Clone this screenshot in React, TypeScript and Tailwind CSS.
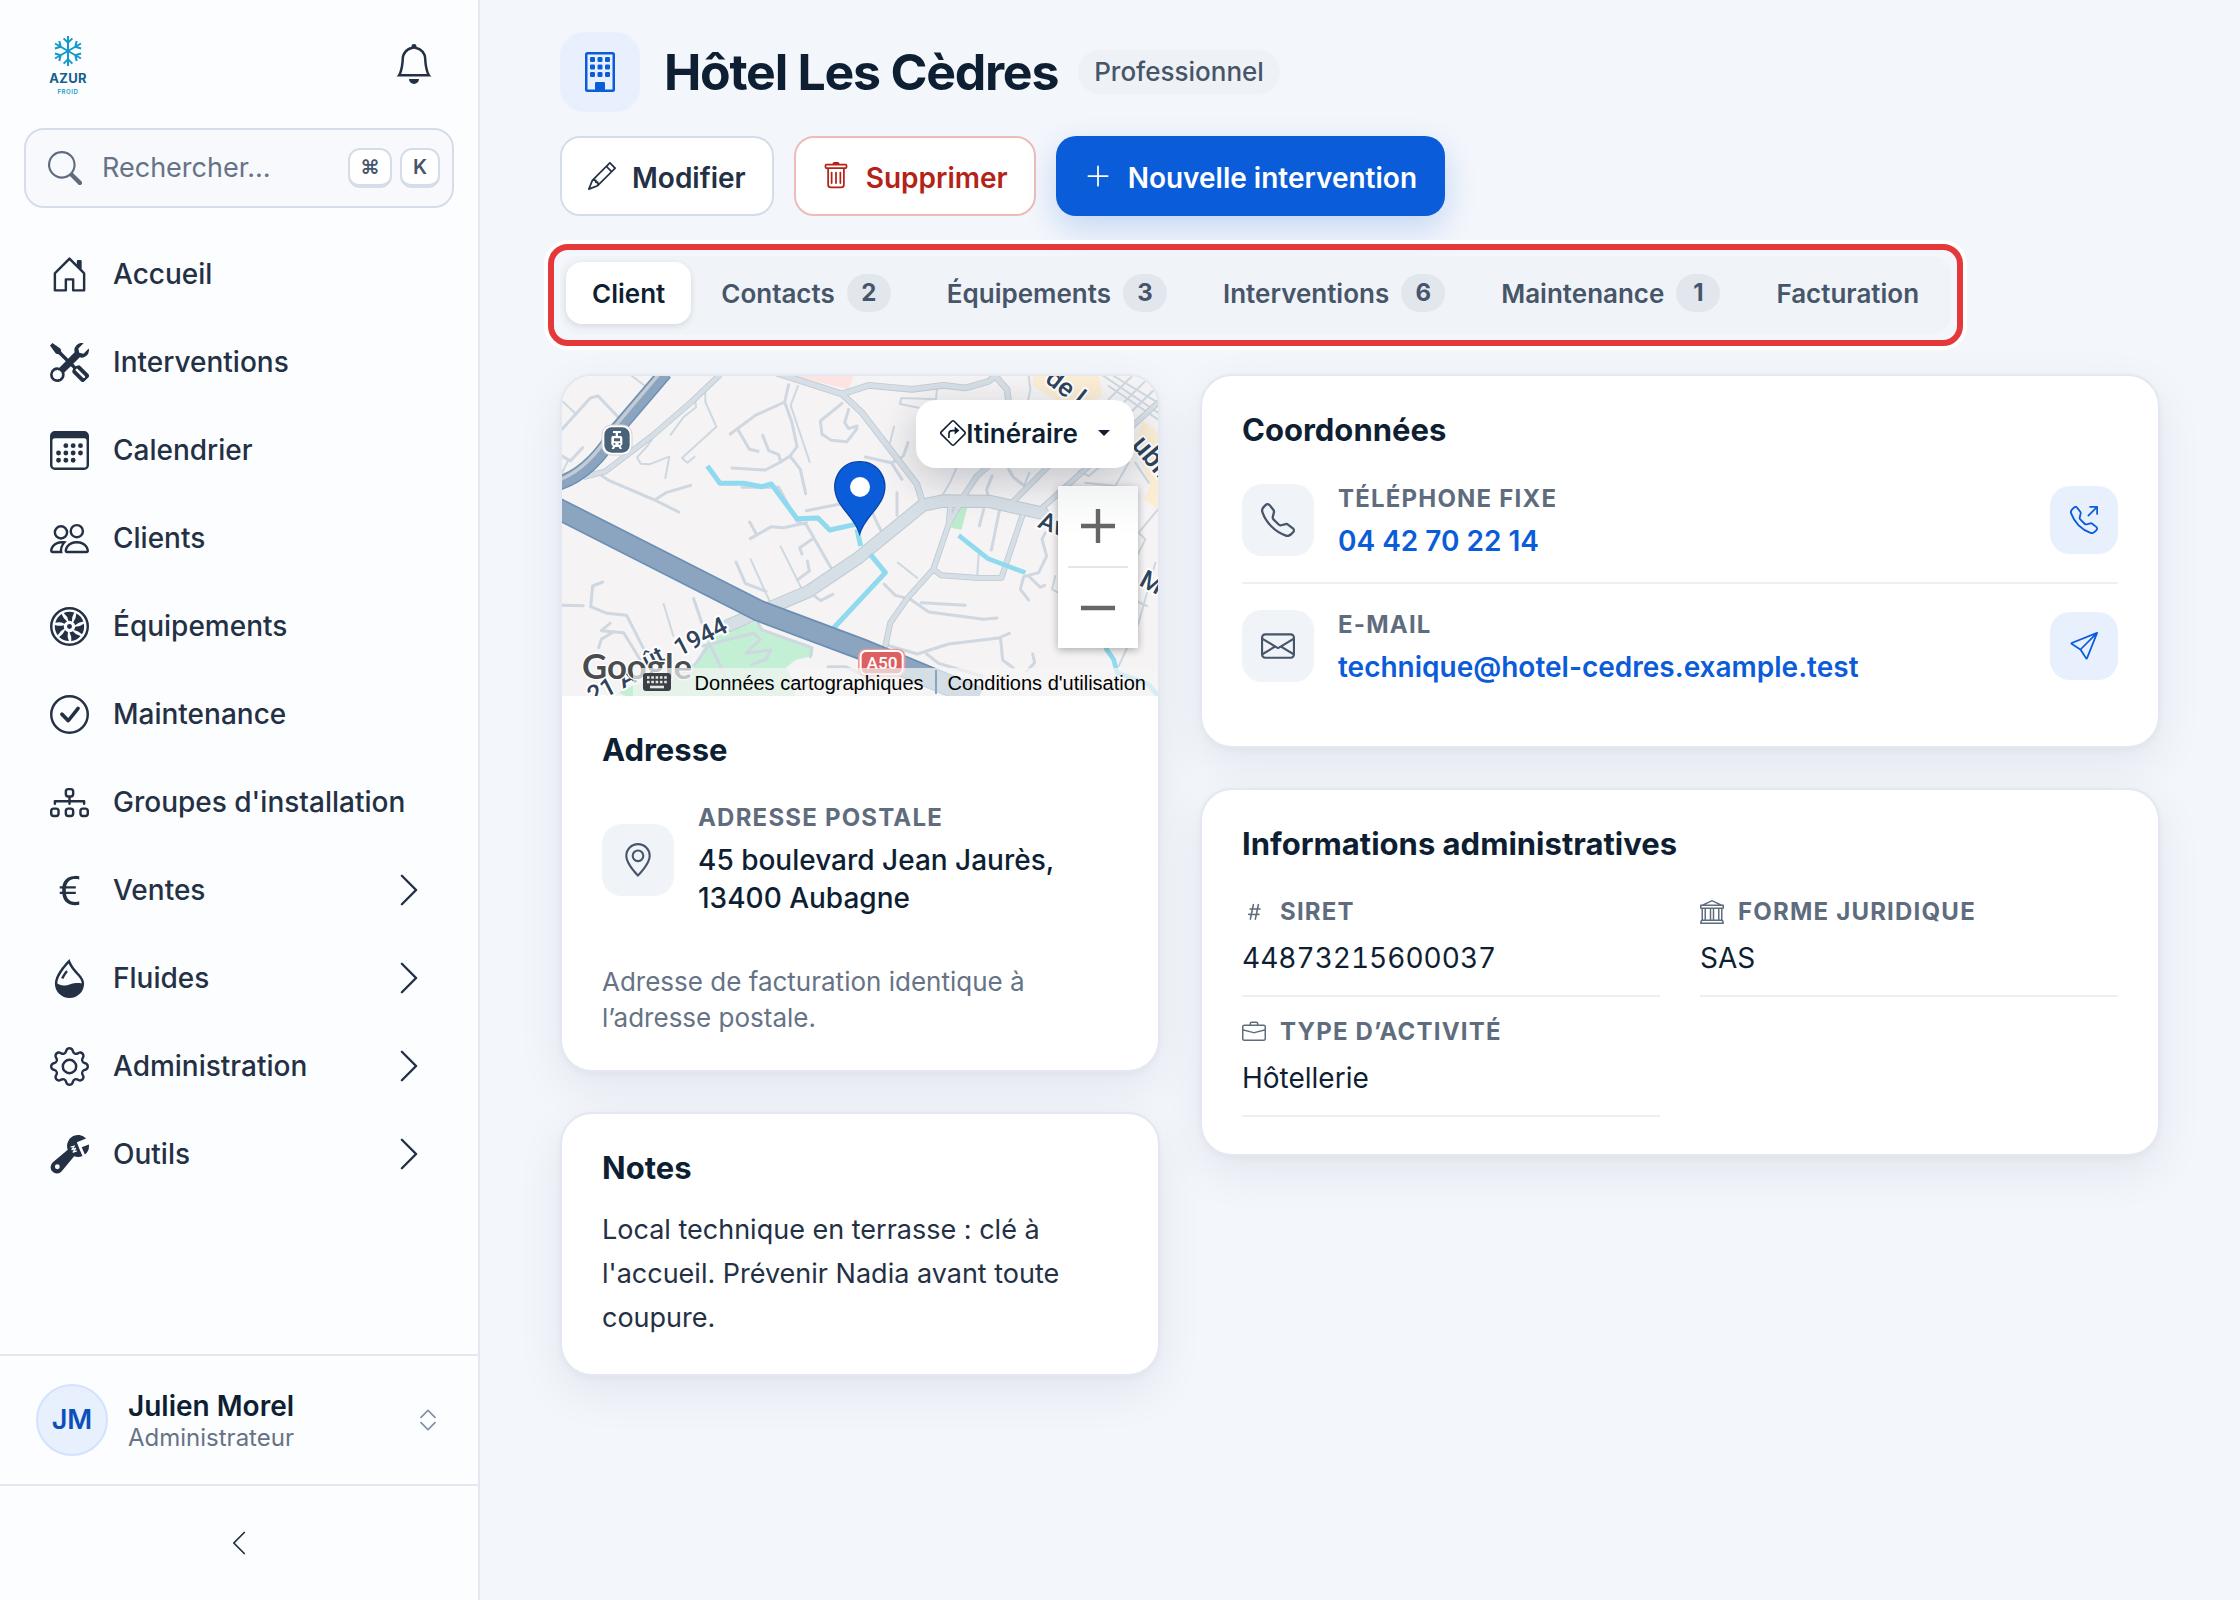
import React from "react";
import {
  BsBank, BsBell, BsBriefcase, BsBuilding, BsCalendar3, BsCheckCircle, BsChevronExpand, BsChevronLeft,
  BsChevronRight, BsCurrencyEuro, BsDiagram3, BsDropletHalf, BsEnvelope, BsGear, BsGeoAlt, BsHash,
  BsHouseDoor, BsPencil, BsPeople, BsPlusLg, BsSearch, BsSend, BsSignTurnRight, BsTelephone,
  BsTelephoneOutbound, BsTools, BsTrash, BsWrenchAdjustable,
} from "react-icons/bs";

type IconType = React.ComponentType<{ className?: string }>;

function FanIcon({ className }: { className?: string }) {
  return (
    <svg viewBox="0 0 16 16" fill="currentColor" className={className}>
      <circle cx="8" cy="8" r="7.5" fill="none" stroke="currentColor" />
      {[0, 1, 2, 3, 4, 5, 6].map((i) => (
        <path
          key={i}
          transform={`rotate(${i * (360 / 7)} 8 8)`}
          d="M5.6 2.5A6 6 0 0 1 9.95 2.3Q8.9 4 9 5.9A2.3 2.3 0 0 0 7.6 5.7Q7.2 3.8 5.6 2.5Z"
        />
      ))}
      <circle cx="8" cy="8" r="1" />
    </svg>
  );
}

function Logo() {
  return (
    <svg viewBox="0 0 40 62" className="h-[62px] w-10" role="img" aria-label="Azur Froid">
      <g stroke="#1499cb" strokeWidth="2" fill="none">
        {[0, 60, 120, 180, 240, 300].map((a) => (
          <path key={a} transform={`rotate(${a} 20 18)`} d="M20 18V3M15.6 5.4L20 9.6L24.4 5.4" />
        ))}
      </g>
      <text x="20" y="50" textAnchor="middle" className="text-[13px] font-bold tracking-wide" fill="#155e8e" fontFamily="Inter">AZUR</text>
      <text x="20" y="61" textAnchor="middle" className="text-[6px] font-semibold tracking-widest" fill="#1499cb" fontFamily="Inter">FROID</text>
    </svg>
  );
}

const nav: { label: string; icon: IconType; sub?: boolean }[] = [
  { label: "Accueil", icon: BsHouseDoor },
  { label: "Interventions", icon: BsTools },
  { label: "Calendrier", icon: BsCalendar3 },
  { label: "Clients", icon: BsPeople },
  { label: "Équipements", icon: FanIcon },
  { label: "Maintenance", icon: BsCheckCircle },
  { label: "Groupes d'installation", icon: BsDiagram3 },
  { label: "Ventes", icon: BsCurrencyEuro, sub: true },
  { label: "Fluides", icon: BsDropletHalf, sub: true },
  { label: "Administration", icon: BsGear, sub: true },
  { label: "Outils", icon: BsWrenchAdjustable, sub: true },
];

function Sidebar() {
  return (
    <aside className="flex w-120 shrink-0 flex-col border-r-2 border-[#e3e8f1] bg-[#fcfdff]">
      <div className="flex h-32 items-center justify-between pr-10 pl-12">
        <Logo />
        <button type="button" aria-label="Notifications" className="p-1">
          <BsBell className="size-10" />
        </button>
      </div>
      <div className="mx-6 flex h-20 items-center rounded-[20px] border-2 border-[#d5dde8] bg-[#f8f9fd] pr-3 pl-[22px] text-[#5f6c7d]">
        <BsSearch className="size-[34px] shrink-0" />
        <input
          type="search"
          aria-label="Rechercher"
          placeholder="Rechercher…"
          className="ml-5 min-w-0 flex-1 bg-transparent text-[27px] outline-none placeholder:text-[#667386]"
        />
        <kbd className="flex h-10 w-11 items-center justify-center rounded-xl border-2 border-b-4 border-[#d5dde8] bg-white font-[Inter] text-[20px] font-semibold text-[#475569]">⌘</kbd>
        <kbd className="ml-2 flex h-10 w-10 items-center justify-center rounded-xl border-2 border-b-4 border-[#d5dde8] bg-white font-[Inter] text-[20px] font-semibold text-[#475569]">K</kbd>
      </div>
      <nav className="mt-[22px] flex flex-col">
        {nav.map(({ label, icon: Icon, sub }) => (
          <a key={label} href="#" className="flex h-22 items-center pr-[50px] pl-[50px] text-[28px] font-medium">
            <Icon className="size-[39px] shrink-0" />
            <span className="ml-6 flex-1">{label}</span>
            {sub && <BsChevronRight className="size-[38px]" />}
          </a>
        ))}
      </nav>
      <button type="button" className="mt-auto flex h-[130px] items-center border-t-2 border-[#e3e8f1] px-9 text-left">
        <span className="flex size-18 items-center justify-center rounded-full border-2 border-[#d3e2fd] bg-[#e8f0fe] text-[27px] font-semibold text-[#0b4fb8]">JM</span>
        <span className="ml-5 flex flex-1 flex-col pt-1">
          <span className="text-[28px] leading-8 font-semibold text-[#0f1f33]">Julien Morel</span>
          <span className="text-[24px] leading-8 text-[#667386]">Administrateur</span>
        </span>
        <BsChevronExpand className="size-7 text-[#8290a3]" />
      </button>
      <button type="button" aria-label="Réduire le menu" className="flex h-[116px] items-center justify-center border-t-2 border-[#e3e8f1]">
        <BsChevronLeft className="size-7" />
      </button>
    </aside>
  );
}

function PageHeader() {
  return (
    <header>
      <div className="flex items-center">
        <div className="flex size-20 items-center justify-center rounded-3xl bg-[#e8f0fe]">
          <BsBuilding className="size-10 text-[#0b5cd9]" />
        </div>
        <h1 className="ml-6 text-[50px] leading-[60px] font-bold tracking-tight text-[#0f1f33]">Hôtel Les Cèdres</h1>
        <span className="ml-5 rounded-full bg-[#eef1f5] px-4 text-[26px] leading-11 font-medium text-[#475569]">Professionnel</span>
      </div>
      <div className="mt-6 flex gap-5 text-[28px] font-semibold">
        <button type="button" className="flex h-20 items-center gap-4 rounded-[20px] border-2 border-[#d5dde8] bg-white px-[26px]">
          <BsPencil className="size-7" />
          <span className="pt-1">Modifier</span>
        </button>
        <button type="button" className="flex h-20 items-center gap-4 rounded-[20px] border-2 border-[#ecbcb8] bg-white px-[26px] text-[#b42318]">
          <BsTrash className="size-7" />
          <span className="pt-1">Supprimer</span>
        </button>
        <button type="button" className="flex h-20 items-center gap-4 rounded-[20px] bg-[#0b5cd9] px-7 text-white shadow-[0_12px_32px_rgba(11,92,217,0.2)]">
          <BsPlusLg className="size-7" />
          <span className="pt-1">Nouvelle intervention</span>
        </button>
      </div>
    </header>
  );
}

const tabs: { label: string; count?: number }[] = [
  { label: "Client" },
  { label: "Contacts", count: 2 },
  { label: "Équipements", count: 3 },
  { label: "Interventions", count: 6 },
  { label: "Maintenance", count: 1 },
  { label: "Facturation" },
];

function Tabs() {
  return (
    <div className="relative mt-10 w-fit rounded-[20px] bg-[#f0f3f8] px-1.5 pt-1.5 pb-2.5">
      <div role="tablist" className="flex gap-1">
        {tabs.map(({ label, count }, i) => (
          <button
            key={label}
            type="button"
            role="tab"
            aria-selected={i === 0}
            className={
              i === 0
                ? "flex h-[62px] items-center rounded-2xl bg-white px-[26px] text-[26px] font-semibold text-[#0f1f33] shadow-[0_2px_6px_rgba(15,31,51,0.12)]"
                : "flex h-[62px] items-center rounded-2xl px-[26px] text-[26px] font-semibold text-[#475569]"
            }
          >
            {label}
            {count !== undefined && (
              <span className="ml-3 flex h-[38px] min-w-11 items-center justify-center rounded-full bg-[#e2e7ee] text-[24px] font-bold">{count}</span>
            )}
          </button>
        ))}
      </div>
      <div className="pointer-events-none absolute -inset-3 rounded-[20px] border-6 border-[#e5383b] shadow-[0_0_0_4px_#ffffff]" />
    </div>
  );
}

function MapDrawing() {
  return (
    <svg viewBox="0 0 1788 960" preserveAspectRatio="xMidYMid slice" className="block h-full w-full" aria-hidden="true">
      <rect width="1788" height="960" fill="#f5f3f4" />
      <path d="M690 0L860 40L875 0Z" fill="#fde3e1" />
      <path d="M1415 0H1610L1622 60L1545 90L1480 70L1412 30Z" fill="#fbeed5" />
      <path d="M1740 130L1788 170V400L1745 370L1765 330L1720 220Z" fill="#fbeed5" />
      <path d="M440 790L580 738L600 760L752 815V840L700 852L672 875L690 905L700 960H190L170 950L210 930L330 890L400 860Z" fill="#c3efd4" />
      <path d="M1185 390L1216 394L1198 462L1167 455Z" fill="#bdeccd" />
      <g fill="none" stroke="#cfd7e1" strokeWidth="9" strokeLinecap="round" strokeLinejoin="round">
        <path d="M0 160L85 66L108 60L175 130M0 240L25 255L62 215" />
        <path d="M120 300L142 314L278 372L350 408M278 372L312 350L386 328" />
        <path d="M668 78L680 26M505 174L580 118L668 78L690 140L705 212L684 240L656 258L610 282L510 276M527 160L562 220L588 226M602 178L620 224L650 236L656 258M684 240L715 280L731 353" />
        <path d="M840 82L775 135L780 175L808 193L855 197L885 158M860 100L848 140L860 158L885 150" />
        <path d="M540 334L650 334L705 436L733 446L806 574M565 488L628 452L664 455L733 440M563 438L583 474M733 404L835 384M756 486L713 515L720 534" />
        <path d="M522 558L550 622L612 646M736 555L742 585L706 612M706 612M752 656L776 674L812 655" />
        <path d="M122 618L92 630L86 692L135 712L194 718L255 838M395 668L422 748M0 688L64 689M118 764L144 742M118 764L185 770L240 860M110 815L118 790L150 770" />
        <path d="M422 810L500 790L575 772L595 790L552 832L627 822L612 850L570 865M445 808L485 890L500 920M400 865L440 808M587 740L600 762L750 815L745 842" />
        <path d="M910 243L988 260L1020 310M1038 200L1024 240L988 262M1005 350V418M912 360L940 430L960 470M1290 300L1274 340L1280 370M1340 280L1355 305L1388 330M1265 400L1252 450M1312 405L1288 522M1450 470L1440 490L1454 540L1430 590L1385 602L1375 640L1400 672M1400 600L1435 634L1448 628" />
        <path d="M966 624L1000 658L1045 670L1100 708L1265 730L1305 726M1078 680L1210 688M970 806L1066 834L1160 804L1310 786L1342 772M1316 790L1322 852L1354 876M1094 834L1130 862L1260 900M1412 834L1418 860L1395 885M798 872L850 872L930 910" />
      </g>
      <g fill="none" stroke="#cdd8e1" strokeWidth="6" strokeLinejoin="round" strokeLinecap="round">
        <path d="M210 0L275 50M0 75L38 110M0 290L20 250" />
        <path d="M430 46V78L463 152L360 246L376 260L398 242M400 76L402 94L364 124L326 176M270 190L256 210L225 244L236 263L262 265L322 242L310 306" />
        <path d="M708 30L686 88L743 258M656 512L720 640M566 550L625 680M305 684L334 780" />
        <path d="M1125 38L1122 70L1018 66L1014 84L1070 95M996 152L984 200M1400 0L1405 40L1398 75M1184 275L1164 320L1140 360M1008 560L1066 606M1250 535L1246 596M1386 330L1402 290M1480 600L1470 640L1530 672L1560 680" />
        <path d="M1625 0L1788 110M1640 70L1710 0M1670 95L1755 10M1700 115L1788 30M1655 0L1788 80M1640 30L1788 130M1720 260L1760 320M1550 285L1580 300L1610 275M1570 320L1660 330L1700 260M1788 400L1730 470L1750 490L1725 540M1780 560L1730 740L1670 870M1690 660L1755 690" />
      </g>
      <g fill="none" strokeLinejoin="round" strokeLinecap="round">
        <g stroke="#becad3">
          <path d="M470 0L388 78L270 180L130 286L70 302" strokeWidth="18" />
          <path d="M640 -10L840 54L900 110L1065 325L1082 380M840 54L920 28L1050 40L1145 28L1210 36L1280 16L1300 0L1335 40L1340 80" strokeWidth="20" />
          <path d="M500 748L740 646L890 545L1082 388L1142 375L1280 376L1442 412" strokeWidth="40" />
          <path d="M1165 392L1160 445L1114 580L1035 668L985 740L970 810M1114 580L1138 598L1250 606L1318 606L1380 422M1190 390L1160 445M1205 360L1245 300L1280 270M1352 378L1460 270M1436 400L1570 280L1788 80" strokeWidth="18" />
        </g>
        <g stroke="#d7dfe6">
          <path d="M470 0L388 78L270 180L130 286L70 302" strokeWidth="13" />
          <path d="M640 -10L840 54L900 110L1065 325L1082 380M840 54L920 28L1050 40L1145 28L1210 36L1280 16L1300 0L1335 40L1340 80" strokeWidth="15" />
          <path d="M500 748L740 646L890 545L1082 388L1142 375L1280 376L1442 412" strokeWidth="34" />
          <path d="M1165 392L1160 445L1114 580L1035 668L985 740L970 810M1114 580L1138 598L1250 606L1318 606L1380 422M1190 390L1160 445M1205 360L1245 300L1280 270M1352 378L1460 270M1436 400L1570 280L1788 80" strokeWidth="13" />
        </g>
      </g>
      <g fill="none" stroke="#8fdaee" strokeWidth="15" strokeLinejoin="round">
        <path d="M436 270L474 322H545L600 332L628 324L705 428L768 426L803 462L880 445M885 460L896 510M925 535L970 590L815 756" />
        <path d="M1190 478L1278 548L1390 590M1630 815L1655 850L1665 890L1760 925L1788 960" strokeWidth="14" />
      </g>
      <g fill="none">
        <path d="M-10 322Q90 290 165 160L310 -10" stroke="#6b8fb3" strokeWidth="44" />
        <path d="M-10 322Q90 290 165 160L310 -10" stroke="#8ba4c0" strokeWidth="36" />
        <path d="M-10 312Q80 280 155 155L295 -10" stroke="#c4cbd3" strokeWidth="10" />
        <path d="M-20 394L590 704L900 820L1250 965" stroke="#6b8fb3" strokeWidth="66" />
        <path d="M-20 394L590 704L900 820L1250 965" stroke="#8ba4c0" strokeWidth="56" />
      </g>
      <rect x="120" y="147" width="90" height="90" rx="28" fill="#ffffff" stroke="#d9cfd2" strokeWidth="3" />
      <rect x="127" y="154" width="76" height="76" rx="22" fill="#48627a" />
      <path d="M153 165h24v6h-9v9h8q5 0 5 6v18q0 5-5 6l4 9h-7l-3-6h-11l-3 6h-7l4-9q-5-1-5-6v-18q0-6 5-6h8v-9h-8zM156 187v9h18v-9zM155 201v5h5v-5zM170 201v5h5v-5z" fill="#ffffff" fillRule="evenodd" />
      <g fontFamily="Roboto, sans-serif" fontWeight="500" fill="#2f435c" stroke="#ffffff" strokeWidth="12" paintOrder="stroke" strokeLinejoin="round">
        <text transform="translate(352 842) rotate(-27)" fontSize="74">1944</text>
        <text transform="translate(256 880) rotate(-27)" fontSize="70">ût</text>
        <text transform="translate(92 985) rotate(-27)" fontSize="74">21 A</text>
        <text transform="translate(1446 16) rotate(38)" fontSize="78">de l</text>
        <text transform="translate(1706 208) rotate(50)" fontSize="84">ublique</text>
        <text transform="translate(1424 452) rotate(22)" fontSize="74">Av</text>
        <text transform="translate(1728 626) rotate(28)" fontSize="76">M</text>
      </g>
      <g>
        <rect x="888" y="818" width="142" height="84" rx="22" fill="#ec9c9c" />
        <rect x="896" y="825" width="126" height="70" rx="16" fill="#dd5f60" stroke="#ffffff" strokeWidth="6" />
        <text x="960" y="879" textAnchor="middle" fontFamily="Roboto, sans-serif" fontWeight="500" fontSize="52" fill="#ffffff">A50</text>
      </g>
      <path d="M893 474C880 430 848 410 829 375C800 315 835 257 893 257S988 315 957 375C938 410 906 430 893 474Z" fill="#0b5cd9" stroke="#0a46a8" strokeWidth="4" />
      <circle cx="894" cy="333" r="30" fill="#ffffff" />
      <text x="60" y="908" fontFamily="Lato, sans-serif" fontSize="104" fontWeight="700" fill="#4a4d50" stroke="#ffffff" strokeWidth="8" paintOrder="stroke">Google</text>
    </svg>
  );
}

function KeyboardIcon() {
  return (
    <svg viewBox="0 0 28 18" className="h-[18px] w-7" aria-hidden="true">
      <rect width="28" height="18" rx="3" fill="#3c4046" />
      <g stroke="#e3e8e6" fill="none">
        <path d="M4 4.5H24M4 9H24" strokeWidth="2.6" strokeDasharray="2.6 1.7" />
        <path d="M7 14H21" strokeWidth="2.6" />
      </g>
    </svg>
  );
}

function MapPanel() {
  return (
    <div className="relative h-80 overflow-hidden">
      <MapDrawing />
      <div className="absolute right-0 bottom-0 flex h-7 items-center bg-[#f5f5f5]/70 pr-3 pl-2.5 font-['Liberation_Sans',sans-serif] text-[20px] text-black">
        <button type="button" aria-label="Raccourcis clavier"><KeyboardIcon /></button>
        <span className="ml-6 pt-0.5">Données cartographiques</span>
        <span className="mx-[11px] h-6 w-0.5 bg-[#8ba4c0]" />
        <a href="#" className="pt-0.5">Conditions d'utilisation</a>
      </div>
      <button type="button" className="absolute top-6 right-6 flex h-17 items-center rounded-[20px] bg-white px-6 pb-0.5 text-[26px] font-semibold text-[#0f1f33] shadow-[0_12px_40px_rgba(15,31,51,0.22)]">
        <BsSignTurnRight className="size-[26px]" />
        Itinéraire
        <svg viewBox="0 0 12 6" className="ml-5 h-1.5 w-3" fill="currentColor" aria-hidden="true"><path d="M0 0H12L6 6Z" /></svg>
      </button>
      <div className="absolute top-[110px] right-5 w-20 bg-linear-to-b from-[#f3f4f5] via-white via-30% to-white px-2.5 shadow-[0_2px_8px_rgba(0,0,0,0.3)]">
        <button type="button" aria-label="Zoom avant" className="flex h-20 w-full items-center justify-center">
          <svg viewBox="0 0 34 34" className="size-[34px]" stroke="#666666" strokeWidth="4.4"><path d="M17 0V34M0 17H34" /></svg>
        </button>
        <div className="h-0.5 bg-[#e6e6e6]" />
        <button type="button" aria-label="Zoom arrière" className="flex h-20 w-full items-center justify-center">
          <svg viewBox="0 0 34 34" className="size-[34px]" stroke="#666666" strokeWidth="4.4"><path d="M0 17H34" /></svg>
        </button>
      </div>
    </div>
  );
}

function Card({ children }: { children: React.ReactNode }) {
  return (
    <section className="overflow-hidden rounded-4xl border-2 border-[#e3e8f1] bg-white bg-clip-padding shadow-[0_2px_6px_rgba(15,31,51,0.04),0_16px_48px_rgba(15,31,51,0.07)]">
      {children}
    </section>
  );
}

function CardTitle({ children }: { children: React.ReactNode }) {
  return <h2 className="text-[31px] leading-8 font-bold text-[#0f1f33]">{children}</h2>;
}

function IconTile({ icon: Icon }: { icon: IconType }) {
  return (
    <div className="flex size-18 shrink-0 items-center justify-center rounded-[20px] bg-[#f0f3f8] text-[#475569]">
      <Icon className="size-[34px]" />
    </div>
  );
}

function ContactRow({ icon, label, value, href, action: Action, actionLabel }: {
  icon: IconType; label: string; value: string; href: string; action: IconType; actionLabel: string;
}) {
  return (
    <div className="flex items-center border-b-2 border-[#eceff3] py-[22px] last:border-b-0">
      <IconTile icon={icon} />
      <div className="ml-6 flex-1 pt-1">
        <div className="mb-2 text-[24px] leading-[30px] font-bold tracking-wider text-[#5f6c7d]">{label}</div>
        <a href={href} className="block text-[28px] leading-[38px] font-semibold text-[#0b5cd9]">{value}</a>
      </div>
      <a href={href} aria-label={actionLabel} className="flex size-17 items-center justify-center rounded-[20px] bg-[#e8f0fe] text-[#0b5cd9]">
        <Action className="size-7" />
      </a>
    </div>
  );
}

function InfoItem({ icon: Icon, label, value }: { icon: IconType; label: string; value: string }) {
  return (
    <div className="border-b-2 border-[#eceff3] pt-5 pb-[18px]">
      <dt className="flex items-center gap-3.5 text-[24px] leading-[30px] font-bold tracking-wider text-[#5f6c7d]">
        <Icon className="size-6" />
        {label}
      </dt>
      <dd className="mt-3 text-[28px] leading-[38px] text-[#0f1f33] tabular-nums">{value}</dd>
    </div>
  );
}

export default function App() {
  return (
    <div className="flex min-h-screen bg-[#f3f6fb] font-[Inter,sans-serif] text-[#243044]">
      <Sidebar />
      <main className="min-w-0 flex-1 px-20 pt-8 pb-20">
        <PageHeader />
        <Tabs />
        <div className="mt-10 grid grid-cols-[minmax(0,5fr)_minmax(0,8fr)] items-start gap-10">
          <div className="flex flex-col gap-10">
            <Card>
              <MapPanel />
              <div className="px-10 pt-[38px] pb-[34px]">
                <CardTitle>Adresse</CardTitle>
                <div className="mt-[37px] flex items-center">
                  <IconTile icon={BsGeoAlt} />
                  <div className="ml-6">
                    <div className="mb-2 text-[24px] leading-[30px] font-bold tracking-wider text-[#5f6c7d]">ADRESSE POSTALE</div>
                    <address className="text-[28px] leading-[38px] font-medium text-[#0f1f33] not-italic">45 boulevard Jean Jaurès,<br />13400 Aubagne</address>
                  </div>
                </div>
                <p className="mt-[47px] text-[26px] leading-9 text-[#667386]">Adresse de facturation identique à l’adresse postale.</p>
              </div>
            </Card>
            <Card>
              <div className="px-10 pt-[38px] pb-[34px]">
                <CardTitle>Notes</CardTitle>
                <p className="mt-6 text-[27px] leading-11">Local technique en terrasse : clé à l'accueil. Prévenir Nadia avant toute coupure.</p>
              </div>
            </Card>
          </div>
          <div className="flex flex-col gap-10">
            <Card>
              <div className="px-10 pt-[38px] pb-[38px]">
                <CardTitle>Coordonnées</CardTitle>
                <div className="mt-3">
                  <ContactRow icon={BsTelephone} label="TÉLÉPHONE FIXE" value="04 42 70 22 14" href="tel:0442702214" action={BsTelephoneOutbound} actionLabel="Appeler" />
                  <ContactRow icon={BsEnvelope} label="E-MAIL" value="technique@hotel-cedres.example.test" href="mailto:technique@hotel-cedres.example.test" action={BsSend} actionLabel="Envoyer un e-mail" />
                </div>
              </div>
            </Card>
            <Card>
              <div className="px-10 pt-[38px] pb-[37px]">
                <CardTitle>Informations administratives</CardTitle>
                <dl className="mt-[17px] grid grid-cols-2 gap-x-10">
                  <InfoItem icon={BsHash} label="SIRET" value="44873215600037" />
                  <InfoItem icon={BsBank} label="FORME JURIDIQUE" value="SAS" />
                  <InfoItem icon={BsBriefcase} label="TYPE D’ACTIVITÉ" value="Hôtellerie" />
                </dl>
              </div>
            </Card>
          </div>
        </div>
      </main>
    </div>
  );
}
